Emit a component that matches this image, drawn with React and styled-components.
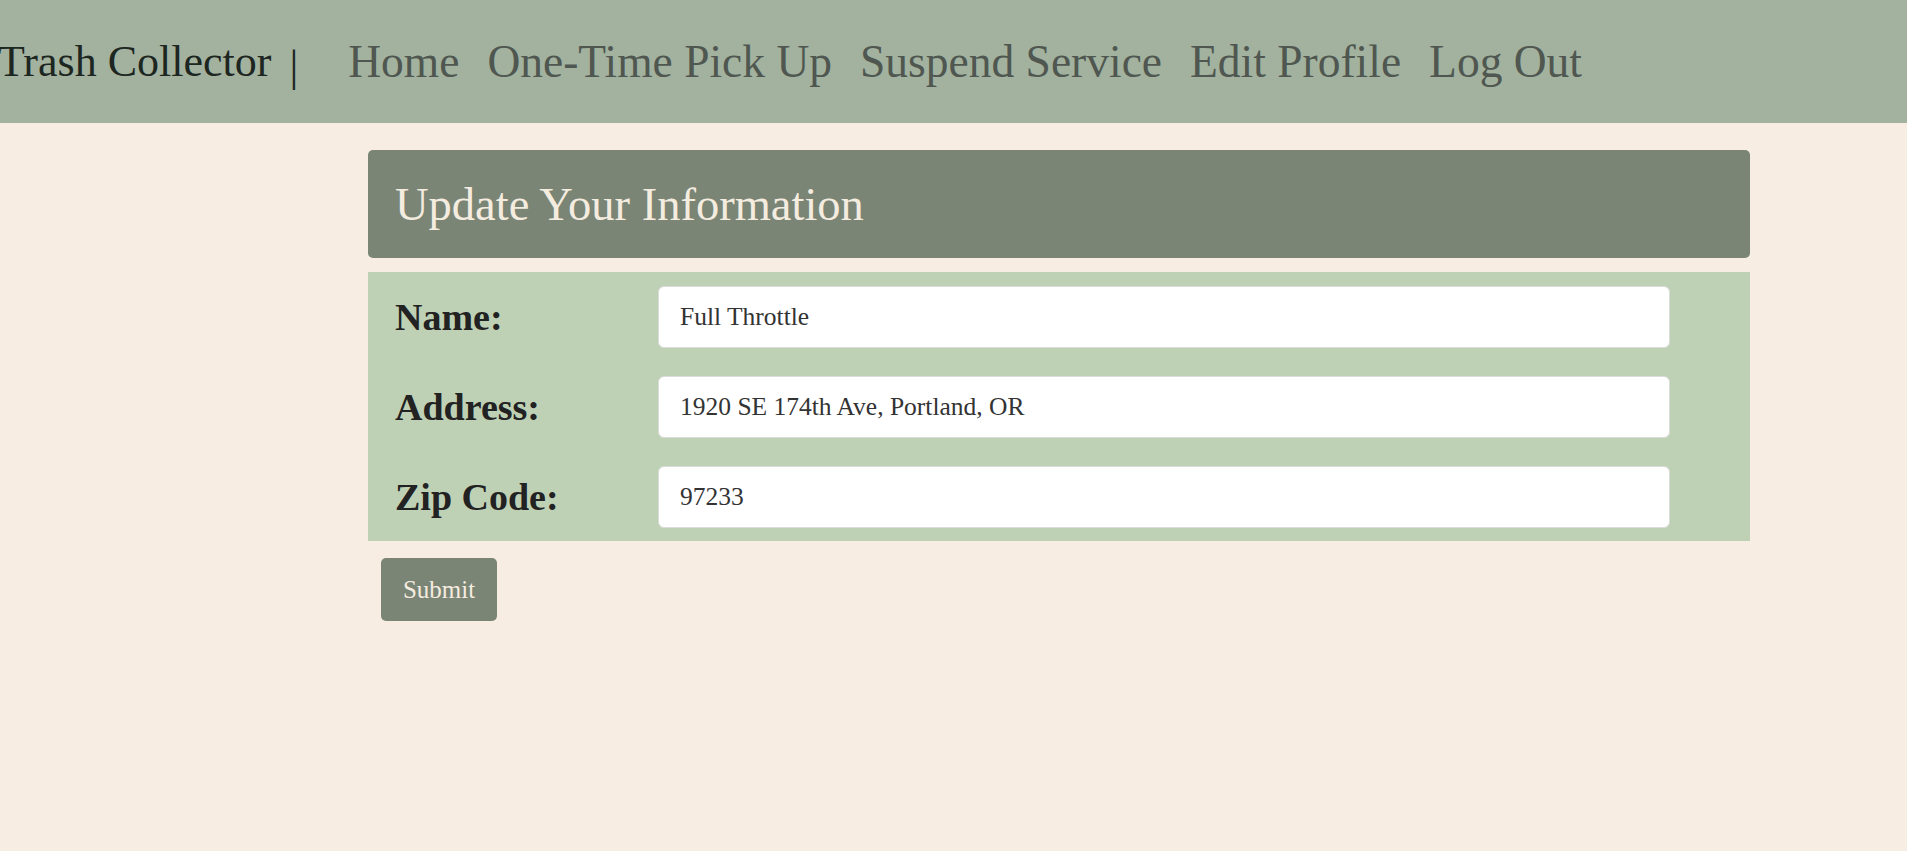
import React, { useState } from 'react'
import styled, { createGlobalStyle } from 'styled-components'

const GlobalStyle = createGlobalStyle`
    body {
        margin: 0;
        background: #f7ede3;
        font-family: "Liberation Serif", "Times New Roman", serif;
    }
`

const Navbar = styled.nav`
    height: 123px;
    background: #a2b29f;
    display: flex;
    align-items: center;
    font-size: 45.5px;
`
const Brand = styled.div`
    color: #1d2621;
    white-space: nowrap;
    margin-left: -2px;
    font-size: 44px;
`
const Divider = styled.span`
    position: relative;
    top: 5px;
    margin-left: 18px;
`
const NavLinks = styled.div`
    display: flex;
    gap: 28px;
    margin-left: 50px;
`
const NavLink = styled.a`
    color: #4f5750;
    text-decoration: none;
    white-space: nowrap;
    cursor: pointer;
`

const Card = styled.div`
    margin: 27px 0 0 368px;
    width: 1382px;
`
const CardHeader = styled.div`
    height: 108px;
    background: #7a8575;
    border-radius: 5px;
    display: flex;
    align-items: center;
    padding-left: 27px;
    color: #f5ece0;
    font-size: 46.5px;
`
const FormBody = styled.div`
    margin-top: 14px;
    background: #bfd1b5;
    padding: 14px 80px 13px 27px;
    display: grid;
    grid-template-columns: 263px 1fr;
    row-gap: 28px;
    align-items: center;
`
const Label = styled.label`
    font-size: 38px;
    font-weight: bold;
    color: #222;
`
const Input = styled.input`
    height: 62px;
    box-sizing: border-box;
    border: 1px solid #d9dcd8;
    border-radius: 6px;
    background: #fff;
    padding: 0 21px;
    font-family: "Liberation Serif", "Times New Roman", serif;
    font-size: 25.5px;
    color: #333;
    outline: none;
`
const SubmitButton = styled.button`
    margin: 17px 0 0 13px;
    width: 116px;
    height: 63px;
    border: none;
    border-radius: 5px;
    background: #7a8575;
    color: #f5ece0;
    font-family: "Liberation Serif", "Times New Roman", serif;
    font-size: 25px;
    cursor: pointer;
`

const App = () => {
    const [form, setForm] = useState({
        name: "Full Throttle",
        address: "1920 SE 174th Ave, Portland, OR",
        zip: "97233",
    });
    let update = (key) => (e) => setForm({ ...form, [key]: e.target.value });

    return (
        <>
            <GlobalStyle />
            <Navbar>
                <Brand>Trash Collector<Divider>|</Divider></Brand>
                <NavLinks>
                    <NavLink>Home</NavLink>
                    <NavLink>One-Time Pick Up</NavLink>
                    <NavLink>Suspend Service</NavLink>
                    <NavLink>Edit Profile</NavLink>
                    <NavLink>Log Out</NavLink>
                </NavLinks>
            </Navbar>
            <Card>
                <CardHeader>Update Your Information</CardHeader>
                <FormBody>
                    <Label>Name:</Label>
                    <Input value={form.name} onChange={update("name")} />
                    <Label>Address:</Label>
                    <Input value={form.address} onChange={update("address")} />
                    <Label>Zip Code:</Label>
                    <Input value={form.zip} onChange={update("zip")} />
                </FormBody>
                <SubmitButton>Submit</SubmitButton>
            </Card>
        </>
    )
}

export default App
